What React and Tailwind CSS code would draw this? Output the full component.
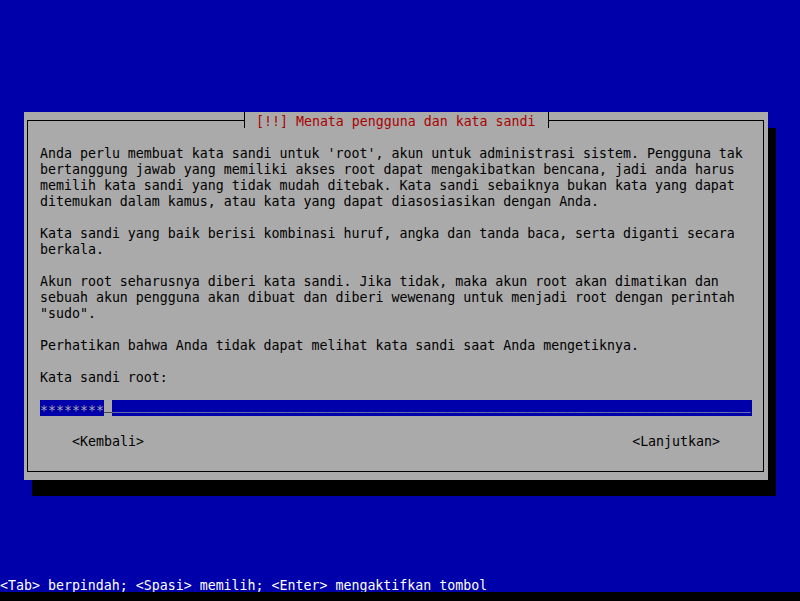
const LINES = [
  "Anda perlu membuat kata sandi untuk 'root', akun untuk administrasi sistem. Pengguna tak",
  "bertanggung jawab yang memiliki akses root dapat mengakibatkan bencana, jadi anda harus",
  "memilih kata sandi yang tidak mudah ditebak. Kata sandi sebaiknya bukan kata yang dapat",
  "ditemukan dalam kamus, atau kata yang dapat diasosiasikan dengan Anda.",
  "",
  "Kata sandi yang baik berisi kombinasi huruf, angka dan tanda baca, serta diganti secara",
  "berkala.",
  "",
  "Akun root seharusnya diberi kata sandi. Jika tidak, maka akun root akan dimatikan dan",
  "sebuah akun pengguna akan dibuat dan diberi wewenang untuk menjadi root dengan perintah",
  '"sudo".',
  "",
  "Perhatikan bahwa Anda tidak dapat melihat kata sandi saat Anda mengetiknya.",
  "",
  "Kata sandi root:",
];

function PasswordField() {
  return (
    <div className="flex h-[16px] items-start">
      <span className="h-[16px] bg-[#0000aa] leading-[21px] text-[#aaaaaa]">
        ********
      </span>
      <span className="h-[16px] leading-[10px] text-black">_</span>
      <span className="h-[16px] flex-1 bg-[#0000aa] leading-[10px] text-[#aaaaaa]">
        {"_".repeat(80)}
      </span>
    </div>
  );
}

export default function App() {
  return (
    <div className="flex h-[601px] w-[800px] flex-col bg-[#0000aa] font-['DejaVu_Sans_Mono','Liberation_Mono',monospace] text-[13.28px] leading-[20px] whitespace-pre">
      <div className="pl-[24px] pt-[112px]">
        <div className="relative h-[368px] w-[744px] bg-[#aaaaaa] pb-[8px] pl-[3px] pr-[4px] pt-[8px] shadow-[8px_16px_0_0_#000]">
          <div className="h-full border border-black pb-[23px] pl-[12px] pr-[11px] pt-[23px] text-black">
            <div>
              {LINES.map((line, i) => (
                <div key={i} className="h-[16px]">
                  {line}
                </div>
              ))}
            </div>
            <div className="h-[16px]" />
            <PasswordField />
            <div className="h-[16px]" />
            <div className="flex h-[16px] justify-between px-[32px]">
              <span>&lt;Kembali&gt;</span>
              <span>&lt;Lanjutkan&gt;</span>
            </div>
          </div>
          <div className="absolute left-[220px] top-0 h-[16px] w-[305px] border-x border-black bg-[#aaaaaa] pl-[3px] text-[#aa0000]">
            {" [!!] Menata pengguna dan kata sandi "}
          </div>
        </div>
      </div>
      <div className="flex-1" />
      <div className="h-[16px] overflow-hidden text-white">
        &lt;Tab&gt; berpindah; &lt;Spasi&gt; memilih; &lt;Enter&gt; mengaktifkan tombol
      </div>
      <div className="h-[9px] bg-black" />
    </div>
  );
}
